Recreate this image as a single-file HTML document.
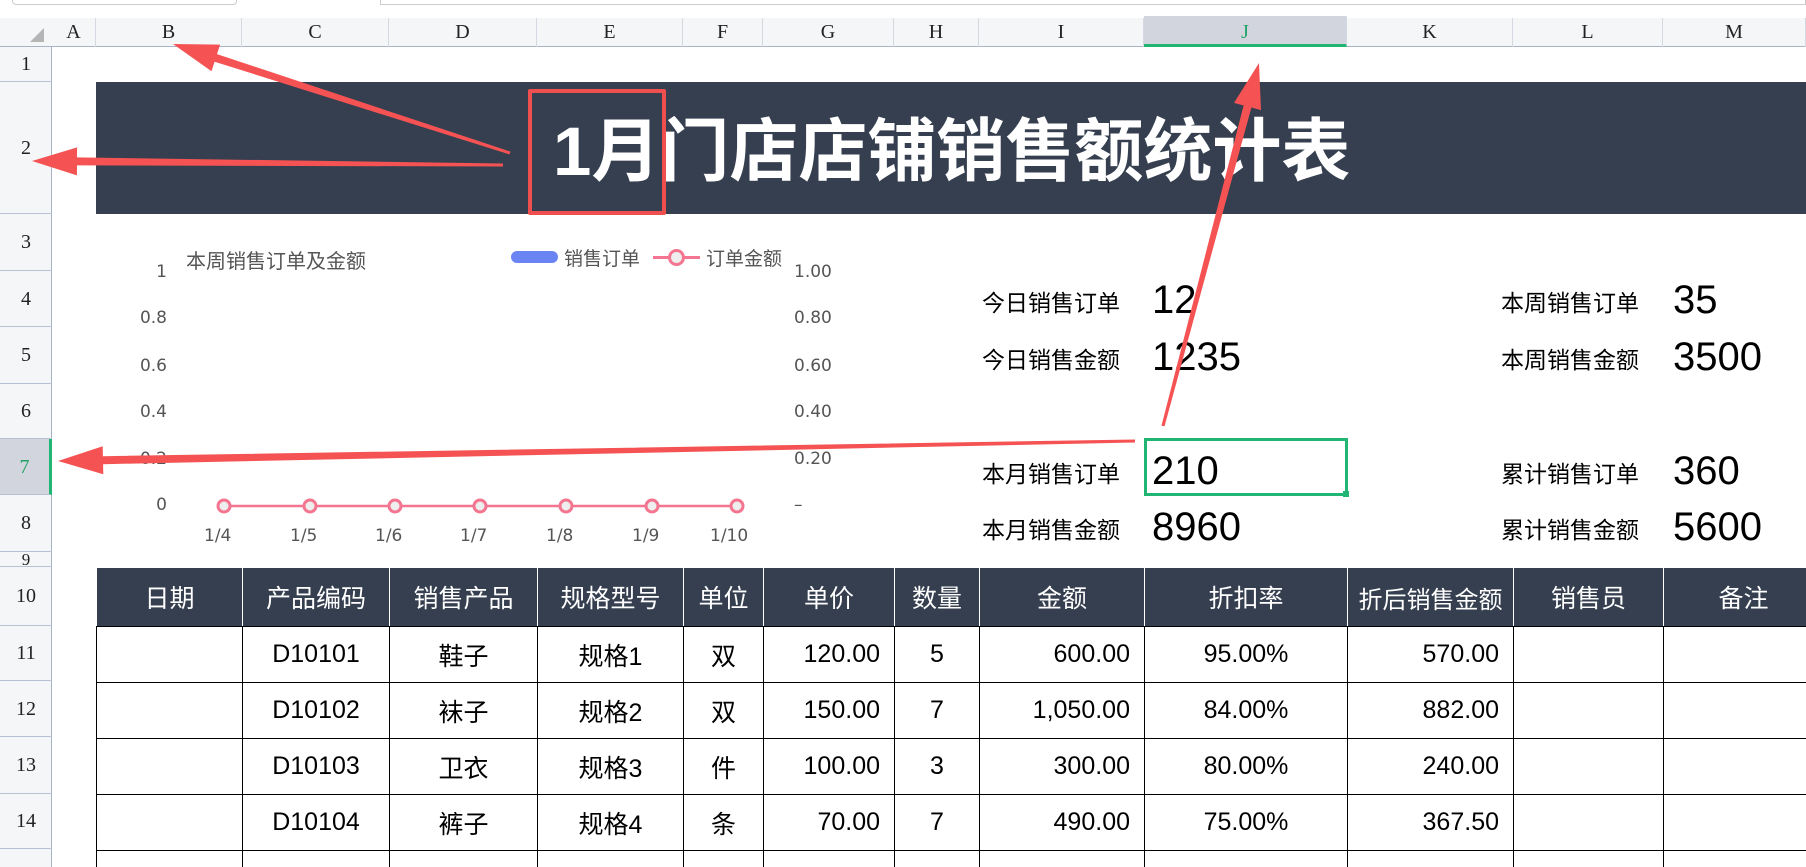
<!DOCTYPE html>
<html style="width:1806px;height:867px;overflow:hidden"><head><meta charset="utf-8"><style>
*{margin:0;padding:0;box-sizing:border-box}
body{width:1806px;height:867px;overflow:hidden;background:#fff;position:relative;font-family:"Liberation Sans","Noto Sans CJK SC",sans-serif}
#w{position:absolute;left:0;top:0;width:1806px;height:867px;overflow:hidden}
.a{position:absolute}
.ch{position:absolute;top:18px;height:29px;font-family:"Liberation Serif","Noto Serif CJK SC",serif;font-size:20px;color:#222;text-align:center;line-height:29px;border-right:1px solid #d4d8e0}
.rh{position:absolute;left:0;width:52px;font-family:"Liberation Serif",serif;font-size:20px;color:#222;text-align:center;border-bottom:1px solid #b8c0d4}
table{position:absolute;left:96px;top:567px;width:1727px;border-collapse:collapse;table-layout:fixed}
td{border:1.5px solid #000;font-size:25px;color:#000;text-align:center;height:56px;white-space:nowrap;overflow:hidden}
tr.h td{background:#353f4f;color:#fff;border:1px solid #fff;border-bottom:1.5px solid #000;height:59px}
td.r{text-align:right;padding-right:14px}
.k{position:absolute;font-size:23px;color:#000}
.v{position:absolute;font-size:40px;color:#000}
.g{position:absolute;font-size:17px;color:#555;font-family:"DejaVu Sans",sans-serif}
</style></head><body><div id="w">
<div class="a" style="left:0;top:0;width:1806px;height:18px;background:#fff"></div>
<div class="a" style="left:12px;top:0;width:225px;height:5px;border:1px solid #ccc;border-top:none;border-radius:0 0 4px 4px"></div>
<div class="a" style="left:380px;top:0;width:1426px;height:5px;border:1px solid #ccc;border-top:none"></div>
<div class="a" style="left:0;top:18px;width:1806px;height:29px;background:#f5f6f8;border-bottom:1px solid #aab2c6"></div>
<div class="a" style="left:0;top:47px;width:52px;height:820px;background:#f5f6f8;border-right:1px solid #aab2c6"></div>
<div class="a" style="left:30px;top:28px;width:0;height:0;border-left:14px solid transparent;border-bottom:14px solid #b5b5b5"></div>
<div class="ch" style="left:52px;width:44px">A</div>
<div class="ch" style="left:96px;width:146px">B</div>
<div class="ch" style="left:242px;width:147px">C</div>
<div class="ch" style="left:389px;width:148px">D</div>
<div class="ch" style="left:537px;width:146px">E</div>
<div class="ch" style="left:683px;width:80px">F</div>
<div class="ch" style="left:763px;width:131px">G</div>
<div class="ch" style="left:894px;width:85px">H</div>
<div class="ch" style="left:979px;width:165px">I</div>
<div class="ch" style="left:1144px;width:203px;top:16px;height:31px;line-height:33px;background:#d2d5dd;color:#21a366;border-bottom:3px solid #21b573">J</div>
<div class="ch" style="left:1347px;width:166px">K</div>
<div class="ch" style="left:1513px;width:150px">L</div>
<div class="ch" style="left:1663px;width:143px">M</div>
<div class="rh" style="top:47px;height:35px;line-height:35px">1</div>
<div class="rh" style="top:82px;height:132px;line-height:132px">2</div>
<div class="rh" style="top:214px;height:57px;line-height:57px">3</div>
<div class="rh" style="top:271px;height:56px;line-height:56px">4</div>
<div class="rh" style="top:327px;height:57px;line-height:57px">5</div>
<div class="rh" style="top:384px;height:55px;line-height:55px">6</div>
<div class="rh" style="top:439px;height:56px;line-height:56px;background:#d2d5dd;color:#21a366;border-right:3px solid #21b573">7</div>
<div class="rh" style="top:495px;height:57px;line-height:57px">8</div>
<div class="rh" style="top:552px;height:15px;line-height:15px;font-size:17px">9</div>
<div class="rh" style="top:567px;height:59px;line-height:59px">10</div>
<div class="rh" style="top:626px;height:55px;line-height:55px">11</div>
<div class="rh" style="top:681px;height:56px;line-height:56px">12</div>
<div class="rh" style="top:737px;height:57px;line-height:57px">13</div>
<div class="rh" style="top:794px;height:55px;line-height:55px">14</div>

<div class="a" style="left:96px;top:82px;width:1710px;height:132px;background:#353f4f"></div>
<div class="a" style="left:553px;top:102px;font-size:69px;font-weight:bold;color:#fff;line-height:100px;white-space:nowrap">1月门店店铺销售额统计表</div>
<div class="a" style="left:528px;top:89px;width:138px;height:126px;border:4px solid #f04f50;border-radius:2px"></div>

<div class="g" style="left:186px;top:245px;font-size:20px;font-family:'Liberation Sans','Noto Sans CJK SC',sans-serif">本周销售订单及金额</div>
<div class="a" style="left:511px;top:251px;width:47px;height:12px;background:#6a85f3;border-radius:6px"></div>
<div class="g" style="left:564px;top:244px;font-size:19px;font-family:'Liberation Sans','Noto Sans CJK SC',sans-serif">销售订单</div>
<div class="a" style="left:653px;top:256px;width:47px;height:3px;background:#f47590"></div>
<div class="a" style="left:668px;top:249px;width:17px;height:17px;border:3px solid #f47590;border-radius:50%;background:#eee"></div>
<div class="g" style="left:706px;top:244px;font-size:19px;font-family:'Liberation Sans','Noto Sans CJK SC',sans-serif">订单金额</div>
<div class="g" style="left:100px;width:67px;text-align:right;top:262px">1</div>
<div class="g" style="left:100px;width:67px;text-align:right;top:308px">0.8</div>
<div class="g" style="left:100px;width:67px;text-align:right;top:356px">0.6</div>
<div class="g" style="left:100px;width:67px;text-align:right;top:402px">0.4</div>
<div class="g" style="left:100px;width:67px;text-align:right;top:449px">0.2</div>
<div class="g" style="left:100px;width:67px;text-align:right;top:495px">0</div>
<div class="g" style="left:794px;top:262px">1.00</div>
<div class="g" style="left:794px;top:308px">0.80</div>
<div class="g" style="left:794px;top:356px">0.60</div>
<div class="g" style="left:794px;top:402px">0.40</div>
<div class="g" style="left:794px;top:449px">0.20</div>
<div class="g" style="left:794px;top:495px">–</div>
<svg class="a" style="left:0;top:0" width="1806" height="867">
<line x1="224" y1="506" x2="737" y2="506" stroke="#f47590" stroke-width="2.5"/>
<g fill="#eee" stroke="#f47590" stroke-width="3">
<circle cx="224" cy="506" r="6"/><circle cx="310" cy="506" r="6"/><circle cx="395" cy="506" r="6"/><circle cx="480" cy="506" r="6"/><circle cx="566" cy="506" r="6"/><circle cx="652" cy="506" r="6"/><circle cx="737" cy="506" r="6"/></g>
</svg>
<div class="g" style="left:204px;top:526px">1/4</div>
<div class="g" style="left:290px;top:526px">1/5</div>
<div class="g" style="left:375px;top:526px">1/6</div>
<div class="g" style="left:460px;top:526px">1/7</div>
<div class="g" style="left:546px;top:526px">1/8</div>
<div class="g" style="left:632px;top:526px">1/9</div>
<div class="g" style="left:710px;top:526px">1/10</div>

<div class="k" style="left:982px;top:284px">今日销售订单</div><div class="v" style="left:1152px;top:278px">12</div>
<div class="k" style="left:982px;top:341px">今日销售金额</div><div class="v" style="left:1152px;top:335px">1235</div>
<div class="k" style="left:982px;top:455px">本月销售订单</div><div class="v" style="left:1152px;top:449px">210</div>
<div class="k" style="left:982px;top:511px">本月销售金额</div><div class="v" style="left:1152px;top:505px">8960</div>
<div class="k" style="left:1501px;top:284px">本周销售订单</div><div class="v" style="left:1673px;top:278px">35</div>
<div class="k" style="left:1501px;top:341px">本周销售金额</div><div class="v" style="left:1673px;top:335px">3500</div>
<div class="k" style="left:1501px;top:455px">累计销售订单</div><div class="v" style="left:1673px;top:449px">360</div>
<div class="k" style="left:1501px;top:511px">累计销售金额</div><div class="v" style="left:1673px;top:505px">5600</div>
<div class="a" style="left:1144px;top:438px;width:204px;height:58px;border:3px solid #21b573"></div>
<div class="a" style="left:1343px;top:491px;width:6px;height:6px;background:#21b573"></div>

<table>
<colgroup><col style="width:146px"><col style="width:147px"><col style="width:148px"><col style="width:146px"><col style="width:80px"><col style="width:131px"><col style="width:85px"><col style="width:165px"><col style="width:203px"><col style="width:166px"><col style="width:150px"><col style="width:160px"></colgroup>
<tr class="h"><td>日期</td><td>产品编码</td><td>销售产品</td><td>规格型号</td><td>单位</td><td>单价</td><td>数量</td><td>金额</td><td>折扣率</td><td style="font-size:24px">折后销售金额</td><td>销售员</td><td>备注</td></tr>
<tr><td></td><td>D10101</td><td>鞋子</td><td>规格1</td><td>双</td><td class="r">120.00</td><td>5</td><td class="r">600.00</td><td>95.00%</td><td class="r">570.00</td><td></td><td></td></tr>
<tr><td></td><td>D10102</td><td>袜子</td><td>规格2</td><td>双</td><td class="r">150.00</td><td>7</td><td class="r">1,050.00</td><td>84.00%</td><td class="r">882.00</td><td></td><td></td></tr>
<tr><td></td><td>D10103</td><td>卫衣</td><td>规格3</td><td>件</td><td class="r">100.00</td><td>3</td><td class="r">300.00</td><td>80.00%</td><td class="r">240.00</td><td></td><td></td></tr>
<tr><td></td><td>D10104</td><td>裤子</td><td>规格4</td><td>条</td><td class="r">70.00</td><td>7</td><td class="r">490.00</td><td>75.00%</td><td class="r">367.50</td><td></td><td></td></tr>
<tr><td style="height:20px"></td><td></td><td></td><td></td><td></td><td></td><td></td><td></td><td></td><td></td><td></td><td></td></tr>
</table>

<svg class="a" style="left:0;top:0" width="1806" height="867">
<g fill="#f55353">
<polygon points="510.5,151.6 217,54.1 220.1,44.6 173,44 211.5,71.2 214.6,61.7 509.5,154.4"/>
<polygon points="503,163.5 77,157.4 77.1,147.4 32,161 76.9,175.4 77,165.4 503,166.5"/>
<polygon points="1164.5,426.4 1251.4,107.5 1261,110.1 1259,63 1234,102.9 1243.6,105.5 1161.5,425.6"/>
<polygon points="1135,439.5 102.9,456.2 102.7,446.2 58,461 103.3,474.2 103.1,464.2 1135,442.5"/>
</g>
</svg>
</div></body></html>
